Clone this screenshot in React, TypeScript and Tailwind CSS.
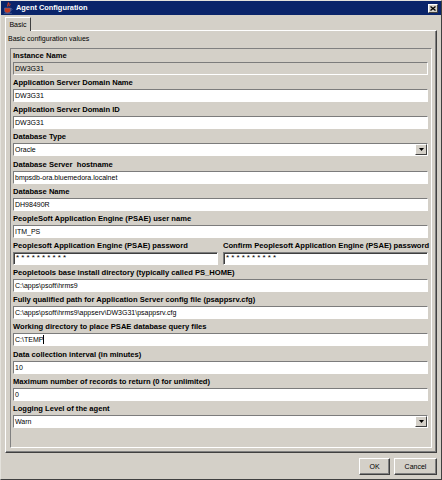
import React from "react";

type Row = {
  label: string;
  value: string;
  disabled?: boolean;
  combo?: boolean;
  caret?: boolean;
};

const rowsTop: Row[] = [
  { label: "Instance Name", value: "DW3G31", disabled: true },
  { label: "Application Server Domain Name", value: "DW3G31" },
  { label: "Application Server Domain ID", value: "DW3G31" },
  { label: "Database Type", value: "Oracle", combo: true },
  { label: "Database Server  hostname", value: "bmpsdb-ora.bluemedora.localnet" },
  { label: "Database Name", value: "DH98490R" },
  { label: "PeopleSoft Application Engine (PSAE) user name", value: "ITM_PS" },
];

const rowsBottom: Row[] = [
  { label: "Peopletools base install directory (typically called PS_HOME)", value: "C:\\apps\\psoft\\hrms9" },
  {
    label: "Fully qualified path for Application Server config file (psappsrv.cfg)",
    value: "C:\\apps\\psoft\\hrms9\\appserv\\DW3G31\\psappsrv.cfg",
  },
  { label: "Working directory to place PSAE database query files", value: "C:\\TEMP", caret: true },
  { label: "Data collection interval (in minutes)", value: "10" },
  { label: "Maximum number of records to return (0 for unlimited)", value: "0" },
  { label: "Logging Level of the agent", value: "Warn", combo: true },
];

function Label({ text }: { text: string }) {
  return (
    <div className="h-[12px] leading-[12px] text-[7.6px] font-bold text-black whitespace-pre">{text}</div>
  );
}

function Field({ row, password }: { row?: Row; password?: boolean }) {
  return (
    <div
      className={`h-[13px] flex items-center border border-t-[#7c7c7c] border-l-[#7c7c7c] border-b-white border-r-white ${
        row?.disabled ? "bg-[#d4d0c8]" : "bg-white"
      } ${password ? "shadow-[inset_1px_1px_0_#404040]" : ""}`}
    >
      {password ? (
        <span className="pl-[2px] text-[8px] leading-none tracking-[2.1px] text-black">**********</span>
      ) : (
        <span className="pl-[1px] text-[7px] leading-none text-black whitespace-nowrap">{row?.value}</span>
      )}
      {row?.caret && <span className="w-px h-[9px] bg-black" />}
      {row?.combo && (
        <div className="ml-auto mr-[0px] w-[12px] h-full bg-[#d4d0c8] border border-t-white border-l-white border-b-[#404040] border-r-[#404040] flex items-center justify-center">
          <svg width="5" height="3" viewBox="0 0 5 3">
            <path d="M0 0h5L2.5 3z" fill="#000" />
          </svg>
        </div>
      )}
    </div>
  );
}

function FieldRow({ row }: { row: Row }) {
  return (
    <div className="flex flex-col">
      <Label text={row.label} />
      <Field row={row} />
    </div>
  );
}

function JavaIcon() {
  return (
    <svg width="10" height="12" viewBox="0 0 10 12">
      <path d="M5 0.5c1.5 1.5-1.2 2.5 0 4" stroke="#e0401c" strokeWidth="1.2" fill="none" />
      <path d="M6.8 1.5c0.9 1-0.8 1.6 0 2.7" stroke="#e0401c" strokeWidth="1" fill="none" />
      <path d="M1.5 6h6v2.5c0 1.5-1.2 2.5-3 2.5s-3-1-3-2.5z" fill="#c43a20" stroke="#5a6fa8" strokeWidth="0.6" />
      <path d="M7.5 6.6h1c0.8 0 0.8 1.6 0 1.6h-1" stroke="#5a6fa8" strokeWidth="0.7" fill="none" />
      <path d="M0.8 11.3h8" stroke="#5a6fa8" strokeWidth="0.7" />
    </svg>
  );
}

export default function App() {
  return (
    <div className="w-[442px] h-[480px] bg-[#d4d0c8] border border-t-[#e4e2dc] border-l-[#e4e2dc] border-b-[#404040] border-r-[#404040] flex flex-col font-['Liberation_Sans',Arial,sans-serif] text-black overflow-hidden">
      {/* Title bar */}
      <div className="h-[14px] bg-[#0a246a] flex items-center pl-[2px] pr-[3px]">
        <JavaIcon />
        <span className="ml-[3px] text-[7.4px] font-bold text-white leading-none">Agent Configuration</span>
        <div className="ml-auto w-[10px] h-[9px] mt-[1px] bg-[#d4d0c8] border border-t-white border-l-white border-b-[#404040] border-r-[#404040] flex items-center justify-center">
          <svg width="6" height="5" viewBox="0 0 6 5">
            <path d="M0.5 0.5l5 4M5.5 0.5l-5 4" stroke="#000" strokeWidth="1.3" />
          </svg>
        </div>
      </div>

      {/* Tab strip */}
      <div className="mt-[2px] ml-[4px] flex">
        <div className="relative z-10 -mb-px w-[26px] h-[14px] bg-[#d4d0c8] border-t border-l border-r border-t-white border-l-white border-r-[#404040] flex items-center justify-center text-[7px] leading-none">
          Basic
        </div>
      </div>

      {/* Tab panel */}
      <div className="ml-[4px] w-[432px] h-[423px] border border-t-white border-l-white border-b-[#404040] border-r-[#404040] shadow-[inset_-1px_-1px_0_#808080] pt-[2px] flex flex-col">
        <div className="h-[12px] leading-[12px] pl-[2px] text-[7px]">Basic configuration values</div>

        {/* Group box */}
        <div className="mt-[3px] ml-[4px] w-[422px] h-[400px] border border-t-[#808080] border-l-[#808080] border-b-white border-r-white pt-[1px] pl-[2px] pr-[3px] flex flex-col gap-[2.15px]">
          {rowsTop.map((r) => (
            <FieldRow key={r.label} row={r} />
          ))}
          <div className="grid grid-cols-2 gap-x-[5px]">
            <div className="flex flex-col">
              <Label text="Peoplesoft Application Engine (PSAE) password" />
              <Field password />
            </div>
            <div className="flex flex-col">
              <Label text="Confirm Peoplesoft Application Engine (PSAE) password" />
              <Field password />
            </div>
          </div>
          {rowsBottom.map((r) => (
            <FieldRow key={r.label} row={r} />
          ))}
        </div>
      </div>

      {/* Buttons */}
      <div className="mt-[5px] pr-[4px] flex justify-end gap-[4px]">
        <button className="w-[31px] h-[17px] bg-[#d4d0c8] border border-t-white border-l-white border-b-[#404040] border-r-[#404040] shadow-[inset_-1px_-1px_0_#808080] text-[7px] leading-none">
          OK
        </button>
        <button className="w-[43px] h-[17px] bg-[#d4d0c8] border border-t-white border-l-white border-b-[#404040] border-r-[#404040] shadow-[inset_-1px_-1px_0_#808080] text-[7px] leading-none">
          Cancel
        </button>
      </div>
    </div>
  );
}
